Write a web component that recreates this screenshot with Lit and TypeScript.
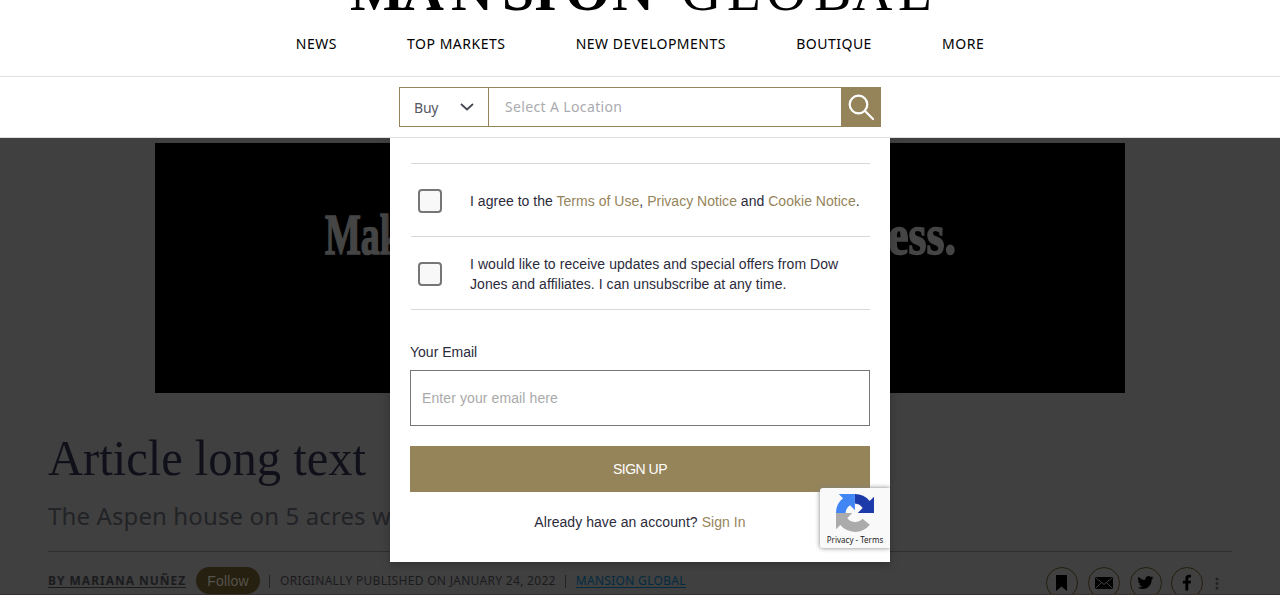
import { LitElement, html, css, svg } from "lit";
import { customElement } from "lit/decorators.js";

const NAV = ["NEWS", "TOP MARKETS", "NEW DEVELOPMENTS", "BOUTIQUE", "MORE"];

const SHARE_ICONS = [
  svg`<path d="M10 8h11v16l-5.500-4.500l-5.500 4.500z"/>`,
  svg`<path d="M7 10h18v12h-18z"/><path class="crease" d="M7.500 10.500l8.500 7l8.500-7M7.500 21.500l6-6M24.500 21.500l-6-6"/>`,
  svg`<path transform="translate(7.500 7.600) scale(.66)" d="M23.950 4.570a10 10 0 0 1-2.820.77 4.960 4.960 0 0 0 2.160-2.720c-.95.550-2 .960-3.130 1.180a4.920 4.920 0 0 0-8.380 4.480C7.690 8.100 4.070 6.130 1.640 3.160a4.920 4.920 0 0 0 1.520 6.570 4.900 4.900 0 0 1-2.230-.61v.06a4.920 4.920 0 0 0 3.950 4.830 5 5 0 0 1-2.210.08 4.940 4.940 0 0 0 4.600 3.420A9.870 9.870 0 0 1 0 19.540a14 14 0 0 0 7.550 2.210c9.050 0 14-7.500 14-13.980 0-.21 0-.42-.02-.63a9.940 9.940 0 0 0 2.460-2.550z"/>`,
  svg`<path d="M14.400 23.500v-7h-2.600v-2.800h2.600v-2.200c0-2.400 1.500-3.700 3.600-3.700h2v2.600h-1.400c-1 0-1.300.500-1.300 1.300v2h2.700l-.4 2.800h-2.300v7z"/>`,
];

@customElement("app-root")
export class AppRoot extends LitElement {
  static styles = css`
    :host { display: block; position: relative; width: 1280px; height: 595px; overflow: hidden; background: #404040; font-family: "Liberation Sans", Arial, sans-serif; }
    * { box-sizing: border-box; }
    header { height: 138px; background: #fff; border-bottom: 1px solid #dfdfdf; }
    .logo { display: block; margin: 0 auto; width: 600px; height: 15px; font-family: "Liberation Serif", serif; }
    .nav { display: flex; justify-content: space-between; width: 688.500px; margin: 0 auto; padding-top: 19px; height: 61px; font-size: 14px; line-height: 20px; color: #000; font-family: "Noto Sans", sans-serif; letter-spacing: .5px; white-space: nowrap; }
    .search-row { border-top: 1px solid #dfdfdf; padding: 10px 0 0 399px; }
    .search { display: flex; width: 482px; height: 40px; border: 1px solid #95845a; font-family: "Noto Sans", sans-serif; font-size: 14px; line-height: 38px; }
    .kind { width: 89px; border-right: 1px solid #95845a; display: flex; justify-content: space-between; align-items: center; padding: 2px 14px 0 14px; color: #555761; letter-spacing: -.2px; }
    .kind svg { margin-top: -2px; }
    .where { flex: 1; padding-left: 16px; color: #aaabb0; letter-spacing: .36px; }
    .go { width: 40px; height: 40px; margin: -1px -1px 0 0; background: #95845a; }
    .go svg { display: block; }
    .banner { display: block; width: 970px; height: 250px; margin: 5px auto 0; background: #000; font-family: "Liberation Serif", serif; }
    .article { padding: 0 48px; }
    h1 { margin: 33px 0 0; height: 66px; }
    .headline { display: block; width: 340px; height: 66px; font: 400 50px "Liberation Serif", serif; }
    h2 { margin: 8px 0 0; height: 32px; font: 400 24px/32px "Noto Sans", sans-serif; color: #222326; white-space: nowrap; letter-spacing: .12px; }
    .meta { margin-top: 19px; border-top: 1px solid #2f2f2f; padding-top: 15px; display: flex; height: 60px; color: #1b1b1e; font: 400 12px/28px "Noto Sans", sans-serif; white-space: nowrap; letter-spacing: .3px; }
    .by { width: 148px; font-weight: 700; letter-spacing: .980px; }
    .by span { text-decoration: underline; text-underline-offset: 2px; }
    .follow { width: 64px; height: 27px; border-radius: 14px; background: #25200f; color: #55534d; font: 14px/28px "Liberation Sans", sans-serif; text-align: center; letter-spacing: .2px; }
    .bar { width: 1px; height: 13px; margin: 8px 10px 0 9px; background: #222; }
    .src { color: #032b40; text-decoration: underline; text-underline-offset: 2px; }
    .share { margin-left: auto; display: flex; gap: 9.700px; padding-right: 11px; }
    .share svg { display: block; width: 32px; height: 32px; }
    .share svg.more { width: 8px; }
    .ring { fill: none; stroke: #25200f; }
    .crease { fill: none; stroke: #404040; }
    .modal { position: absolute; left: 390px; top: 138px; width: 500px; height: 424px; background: #fff; padding: 25px 20px 0; color: #2b2b3b; font-size: 14px; line-height: 20px; letter-spacing: .06px; box-shadow: 0 2px 8px rgba(0,0,0,.25); clip-path: inset(0 -10px -10px -10px); }
    .agree { display: flex; align-items: center; height: 73px; margin-left: 1px; padding: 2px 0 0 7px; border-top: 1px solid #d8d8d8; letter-spacing: .025px; }
    .agree.last { height: 74px; border-bottom: 1px solid #d8d8d8; letter-spacing: .06px; }
    .box { flex: none; width: 24px; height: 24px; margin-right: 28px; border: 2px solid #767676; border-radius: 4px; background: #f8f8f8; }
    .agree p { margin: 0; white-space: nowrap; }
    .gold { color: #95845a; }
    .label { margin-top: 32px; height: 28px; letter-spacing: 0; }
    .email { height: 56px; border: 1px solid #767676; padding: 17px 11px; color: #a9a9a9; letter-spacing: .1px; }
    .signup { height: 46px; margin-top: 20px; background: #95845a; color: #fff; text-align: center; line-height: 47px; letter-spacing: -.5px; }
    .have { margin-top: 20px; text-align: center; }
    .captcha { position: absolute; left: 820px; top: 488px; width: 70px; height: 60px; background: #f9f9f9; border-radius: 3px 0 0 3px; box-shadow: 0 0 5px gray; clip-path: inset(-6px 0 -6px -6px); font: 8px/12px "Noto Sans", sans-serif; color: #222; text-align: center; white-space: nowrap; }
    .captcha svg { display: block; margin: 6px 0 0 16px; }
    .captcha div { margin-top: 2px; }
    .edge { position: absolute; left: 0; right: 0; top: 594px; height: 1px; background: #372f30; }
  `;

  render() {
    return html`
      <header>
        <svg class="logo" viewBox="340 0 600 15">
          <text x="350 402 451 502 534 565 612" y="10" font-size="58" font-weight="700">MANSION</text>
          <text x="681 727 766 814 852 898" y="10" font-size="56">GLOBAL</text>
        </svg>
        <nav class="nav">${NAV.map((n) => html`<span>${n}</span>`)}</nav>
        <div class="search-row"><div class="search">
          <div class="kind"><span>Buy</span>
            <svg width="14" height="8" viewBox="0 0 14 8"><path d="M1 1l6 5.500l6-5.500" fill="none" stroke="#444650" stroke-width="1.700"/></svg></div>
          <div class="where">Select A Location</div>
          <div class="go"><svg width="40" height="40" viewBox="0 0 40 40" fill="none" stroke="#fff" stroke-width="2.200" stroke-linecap="round"><circle cx="17.500" cy="17.500" r="8.800"/><path d="M24 24l8 8"/></svg></div>
        </div></div>
      </header>
      <svg class="banner" viewBox="155 143 970 250" fill="#454545" stroke="#454545" stroke-width="1.600" font-weight="700">
        <text x="325" y="254" font-size="56" textLength="76" lengthAdjust="spacingAndGlyphs">Mak</text>
        <text x="888" y="254" font-size="56" textLength="68" lengthAdjust="spacingAndGlyphs">ess.</text>
      </svg>
      <main class="article">
        <h1><svg class="headline" viewBox="0 0 340 66" fill="#10101a"><text x="0" y="48.500" textLength="318" lengthAdjust="spacingAndGlyphs">Article long text</text></svg></h1>
        <h2>The Aspen house on 5 acres w</h2>
        <div class="meta">
          <span class="by"><span>BY MARIANA NUÑEZ</span></span>
          <span class="follow">Follow</span>
          <i class="bar"></i><span>ORIGINALLY PUBLISHED ON JANUARY 24, 2022</span>
          <i class="bar"></i><span class="src">MANSION GLOBAL</span>
          <div class="share">
            ${SHARE_ICONS.map((i) => html`<svg viewBox="0 0 32 32"><circle class="ring" cx="16" cy="16" r="15.500"/>${i}</svg>`)}
            <svg class="more" viewBox="0 0 8 32" fill="#222"><circle cx="4" cy="12" r="1.500"/><circle cx="4" cy="16.500" r="1.500"/><circle cx="4" cy="21" r="1.500"/></svg>
          </div>
        </div>
      </main>
      <div class="edge"></div>
      <section class="modal">
        <div class="agree"><span class="box"></span><p>I agree to the <span class="gold">Terms of Use</span>, <span class="gold">Privacy Notice</span> and <span class="gold">Cookie Notice</span>.</p></div>
        <div class="agree last"><span class="box"></span><p>I would like to receive updates and special offers from Dow<br>Jones and affiliates. I can unsubscribe at any time.</p></div>
        <div class="label">Your Email</div>
        <div class="email">Enter your email here</div>
        <div class="signup">SIGN UP</div>
        <div class="have">Already have an account? <span class="gold">Sign In</span></div>
      </section>
      <aside class="captcha">
        <svg width="38" height="38" viewBox="0 0 64 64">
          <path fill="#1c3aa9" d="M64 31.960a32 32 0 0 0-.03-1.380V4.640l-7.170 7.170A31.970 31.970 0 0 0 31.960 0v16a16 16 0 0 1 12.900 7.700L36.600 31.960z"/>
          <path fill="#4285f4" d="M31.860 0H4.600l7.200 7.200A31.950 31.950 0 0 0 0 31.950h16a16 16 0 0 1 7.680-12.850l8.180 8.180z"/>
          <path fill="#ababab" d="M0 32v27.300l7.200-7.200A31.970 31.970 0 0 0 57 51.800L44.600 41.700A16 16 0 0 1 19.100 40.300L27.400 32z"/>
        </svg><div>Privacy - Terms</div>
      </aside>`;
  }
}
